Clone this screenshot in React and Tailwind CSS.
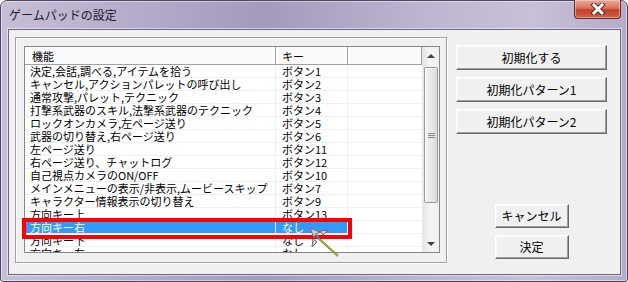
import React from "react";

const rows = [
  ["決定,会話,調べる,アイテムを拾う", "ボタン1"],
  ["キャンセル,アクションパレットの呼び出し", "ボタン2"],
  ["通常攻撃,パレット,テクニック", "ボタン3"],
  ["打撃系武器のスキル,法撃系武器のテクニック", "ボタン4"],
  ["ロックオンカメラ,左ページ送り", "ボタン5"],
  ["武器の切り替え,右ページ送り", "ボタン6"],
  ["左ページ送り", "ボタン11"],
  ["右ページ送り、チャットログ", "ボタン12"],
  ["自己視点カメラのON/OFF", "ボタン10"],
  ["メインメニューの表示/非表示,ムービースキップ", "ボタン7"],
  ["キャラクター情報表示の切り替え", "ボタン9"],
  ["方向キー上", "ボタン13"],
  ["方向キー右", "なし", true],
  ["方向キー下", "なし"],
  ["方向キー左", "なし"],
];

function Btn({ children, className = "" }) {
  return (
    <button
      className={`flex items-center justify-center bg-[#f0f0f0] border border-t-white border-l-white border-r-[#696969] border-b-[#696969] shadow-[inset_-1px_-1px_0_#a0a0a0,inset_1px_1px_0_#f8f8f8] text-[12px] leading-none text-black ${className}`}
    >
      {children}
    </button>
  );
}

function CloseIcon() {
  return (
    <svg width="16" height="12" viewBox="0 0 16 12">
      <path d="M4 2 L12 10 M12 2 L4 10" stroke="#5a2a22" strokeWidth="5" strokeLinecap="square" />
      <path d="M4 2 L12 10 M12 2 L4 10" stroke="#ffffff" strokeWidth="3" strokeLinecap="square" />
    </svg>
  );
}

function Cursor() {
  return (
    <svg width="34" height="32" viewBox="0 0 34 32">
      <path d="M9 11 L30 30" stroke="#6f6f10" strokeWidth="2" />
      <path d="M9 11 L30 30" stroke="#e0e070" strokeWidth="0.8" />
      <path d="M2 2 L12 6 L8 8 L6 12 Z" fill="#c8c8c8" stroke="#6a6a6a" strokeWidth="1" />
      <path d="M12 5 L20 4 L15 9 Z" fill="#d0d0d0" stroke="#6a6a6a" strokeWidth="1" />
      <path d="M5 13 L4 21 L9 16 Z" fill="#d0d0d0" stroke="#6a6a6a" strokeWidth="1" />
      <rect x="8" y="9" width="3" height="3" fill="#d05a8a" stroke="#7a3050" strokeWidth="0.6" />
    </svg>
  );
}

function ScrollBar() {
  return (
    <div className="w-[17px] h-full flex flex-col bg-[linear-gradient(90deg,#e4e4e4,#f4f4f4_40%,#f0f0f0)] border-l border-[#e8e8e8]">
      <div className="h-[17px] flex items-center justify-center">
        <div className="w-0 h-0 border-l-[4px] border-r-[4px] border-b-[4px] border-l-transparent border-r-transparent border-b-[#404040]" />
      </div>
      <div className="mt-[3px] mx-[1px] h-[136px] rounded-[2px] border border-[#9a9a9a] bg-[linear-gradient(90deg,#f4f4f4,#e6e6e6_60%,#d8d8d8)] shadow-[inset_1px_1px_0_#fff] flex flex-col items-center justify-center gap-[1px]">
        <div className="w-[7px] h-[1px] bg-[#8a8a8a]" />
        <div className="w-[7px] h-[1px] bg-[#8a8a8a]" />
        <div className="w-[7px] h-[1px] bg-[#8a8a8a]" />
      </div>
      <div className="flex-1" />
      <div className="h-[17px] flex items-center justify-center">
        <div className="w-0 h-0 border-l-[4px] border-r-[4px] border-t-[4px] border-l-transparent border-r-transparent border-t-[#404040]" />
      </div>
    </div>
  );
}

export default function App() {
  return (
    <div className="w-[628px] h-[282px] font-['Noto_Sans_CJK_JP','Liberation_Sans',sans-serif] text-black">
      <div className="w-full h-full flex flex-col rounded-t-[7px] rounded-b-[3px] border border-[#4e4862] bg-[linear-gradient(90deg,#c7bfd7_0%,#b2a8c8_25%,#a49abc_42%,#beb5d0_68%,#c8c0d7_85%,#b4abc9_100%)] shadow-[inset_0_0_0_1px_rgba(255,255,255,0.45)] pl-[7px] pr-[6px] pb-[6px]">
        {/* title bar */}
        <div className="h-[28px] flex justify-between shrink-0">
          <div className="self-center pl-[1px] pb-[1px] text-[12px] leading-none text-[#1e1a28]">ゲームパッドの設定</div>
          <div className="w-[47px] h-[19px] -mt-[1px] flex items-center justify-center rounded-b-[4px] border border-t-0 border-[#6b2c24] bg-[linear-gradient(180deg,#e9a798_0%,#d9735f_45%,#c2402a_55%,#cf5f45_100%)] shadow-[inset_0_0_0_1px_rgba(255,220,210,0.5)]">
            <CloseIcon />
          </div>
        </div>

        {/* client area */}
        <div className="flex-1 flex border border-[#6c6880] bg-[#f0f0f0] shadow-[0_0_0_1px_rgba(255,255,255,0.5)]">
          {/* group panel */}
          <div className="ml-[6px] mt-[7px] w-[432px] h-[226px] border border-[#a0a0a0] shadow-[inset_1px_1px_0_#fff,1px_1px_0_#fff] pl-[8px] pt-[8px]">
            <div className="relative w-[416px] h-[207px] border border-[#828790] bg-white flex">
              <div className="w-[397px] flex flex-col text-[11px] leading-[12px]">
                {/* header */}
                <div className="h-[18px] flex shrink-0 bg-[#fafafa] border-b border-[#a0a0a0] shadow-[inset_0_1px_0_#fff]">
                  <div className="w-[251px] pl-[7px] flex items-center border-r border-[#a0a0a0] shadow-[1px_0_0_#fff]">機能</div>
                  <div className="w-[72px] pl-[6px] flex items-center border-r border-[#a0a0a0] shadow-[1px_0_0_#fff]">キー</div>
                  <div className="w-[74px] border-r border-[#a0a0a0]" />
                </div>
                {/* rows */}
                <div className="h-[187px] overflow-hidden">
                  {rows.map(([name, key, sel], i) => (
                    <div key={i} className="h-[13px] flex border-b border-[#f0f0f0]">
                      <div className={`w-[251px] pl-[5px] flex items-center whitespace-nowrap border-r border-[#f0f0f0] ${sel ? "bg-[#3399ff] text-white" : ""}`}>{name}</div>
                      <div className={`w-[72px] pl-[6px] flex items-center whitespace-nowrap border-r border-[#f0f0f0] ${sel ? "bg-[#3399ff] text-white" : ""}`}>{key}</div>
                      <div className="w-[74px]" />
                    </div>
                  ))}
                </div>
              </div>
              <ScrollBar />

              {/* red highlight box */}
              <div className="absolute left-[-3px] top-[171px] w-[330px] h-[21px] border-[4px] border-[#ff0000]" />
              {/* mouse cursor */}
              <div className="absolute left-[283px] top-[179px]">
                <Cursor />
              </div>
            </div>
          </div>

          {/* buttons */}
          <div className="ml-[9px] w-[151px] flex flex-col pt-[15px] pb-[15px]">
            <div className="flex flex-col gap-[7px]">
              <Btn className="h-[25px]">初期化する</Btn>
              <Btn className="h-[25px]">初期化パターン1</Btn>
              <Btn className="h-[25px]">初期化パターン2</Btn>
            </div>
            <div className="mt-auto flex flex-col items-center gap-[7px]">
              <Btn className="w-[74px] h-[24px]">キャンセル</Btn>
              <Btn className="w-[74px] h-[24px]">決定</Btn>
            </div>
          </div>
        </div>
      </div>
    </div>
  );
}
